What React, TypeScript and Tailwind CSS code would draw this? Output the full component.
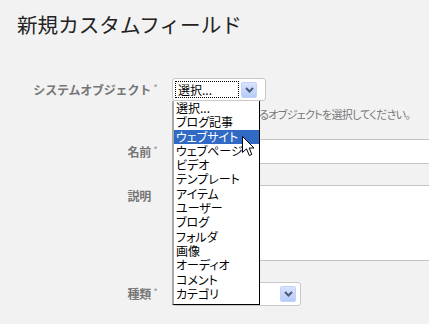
import React from 'react';

const items = [
  '選択...',
  'ブログ記事',
  'ウェブサイト',
  'ウェブページ',
  'ビデオ',
  'テンプレート',
  'アイテム',
  'ユーザー',
  'ブログ',
  'フォルダ',
  '画像',
  'オーディオ',
  'コメント',
  'カテゴリ',
];

const Chevron = () => (
  <svg width="9" height="6" viewBox="0 0 9 6">
    <path d="M1 1 L4.5 4.5 L8 1" fill="none" stroke="#4a5a7a" strokeWidth="2" />
  </svg>
);

const ArrowButton = () => (
  <div className="w-[16px] h-[16px] flex items-center justify-center rounded-[2px] bg-gradient-to-b from-[#d8e3fd] to-[#b7cbf8] border border-[#c3d3f7]">
    <Chevron />
  </div>
);

const Label = ({ text, required }: { text: string; required?: boolean }) => (
  <div className="w-[160px] shrink-0 text-right text-[12px] font-bold text-[#767676] leading-[14px] tracking-[-0.2px]">
    {text}
    <span className={`inline-block w-[9px] text-center align-top text-[10px] leading-[10px] font-normal text-[#9a9a9a] ${required ? '' : 'invisible'}`}>
      *
    </span>
  </div>
);

export default function App() {
  return (
    <div className="relative w-full h-[324px] overflow-hidden bg-[#f2f2f2] text-black font-['Noto_Sans_CJK_JP','Noto_Sans',sans-serif]">
      <h1 className="pt-[11px] pl-[17px] text-[20.6px] leading-[27px] text-[#222]">新規カスタムフィールド</h1>

      <div className="flex flex-col">
        {/* system object */}
        <div className="flex mt-[40px]">
          <div className="pt-[5px]">
            <Label text="システムオブジェクト" required />
          </div>
          <div className="ml-[12px] flex flex-col">
            <div className="w-[94px] h-[23px] bg-white border border-[#c8c8c8] rounded-[3px] flex items-center pl-[2px] pr-[7px] gap-[2px]">
              <div className="w-[64px] h-[17px] border border-dotted border-black text-[12px] leading-[15px] pl-[2px]">選択...</div>
              <ArrowButton />
            </div>
            <div className="mt-[7px] pl-[4px] text-[11px] leading-[12px] tracking-[-0.7px] text-[#777] whitespace-nowrap [font-feature-settings:'palt']">
              フィールドを使用するオブジェクトを選択してください。
            </div>
          </div>
        </div>

        {/* name */}
        <div className="flex items-center mt-[19px]">
          <Label text="名前" required />
          <div className="ml-[12px] w-[300px] h-[25px] bg-white border-y border-[#c4c4c4]" />
        </div>

        {/* description */}
        <div className="flex mt-[21px]">
          <div className="pt-[4px]">
            <Label text="説明" />
          </div>
          <div className="ml-[12px] w-[300px] h-[76px] bg-white border-y border-[#c4c4c4]" />
        </div>

        {/* type */}
        <div className="flex items-center mt-[21px]">
          <Label text="種類" required />
          <div className="ml-[12px] w-[129px] h-[24px] bg-white border border-[#c8c8c8] rounded-[3px] flex items-center justify-end pr-[4px]">
            <ArrowButton />
          </div>
        </div>
      </div>

      {/* open dropdown list */}
      <div className="absolute left-[172px] top-[101px] w-[88px] bg-white border-l-2 border-l-[#a8a8a8] border-r border-b border-r-black border-b-black pb-[3px] text-[12px] [font-feature-settings:'palt']">
        {items.map((it) => (
          <div
            key={it}
            className={`h-[14.3px] leading-[14px] pl-[2px] whitespace-nowrap ${it === 'ウェブサイト' ? 'bg-[#316ac5] text-white' : ''}`}
          >
            {it}
          </div>
        ))}
      </div>

      {/* mouse cursor */}
      <svg className="absolute left-[242px] top-[136px]" width="13" height="21" viewBox="0 0 13 21">
        <path d="M0.5 0.5 L0.5 16.5 L4.5 12.8 L7.3 19.5 L9.8 18.5 L7.2 12 L12 12 Z" fill="white" stroke="black" strokeWidth="1" />
      </svg>
    </div>
  );
}
